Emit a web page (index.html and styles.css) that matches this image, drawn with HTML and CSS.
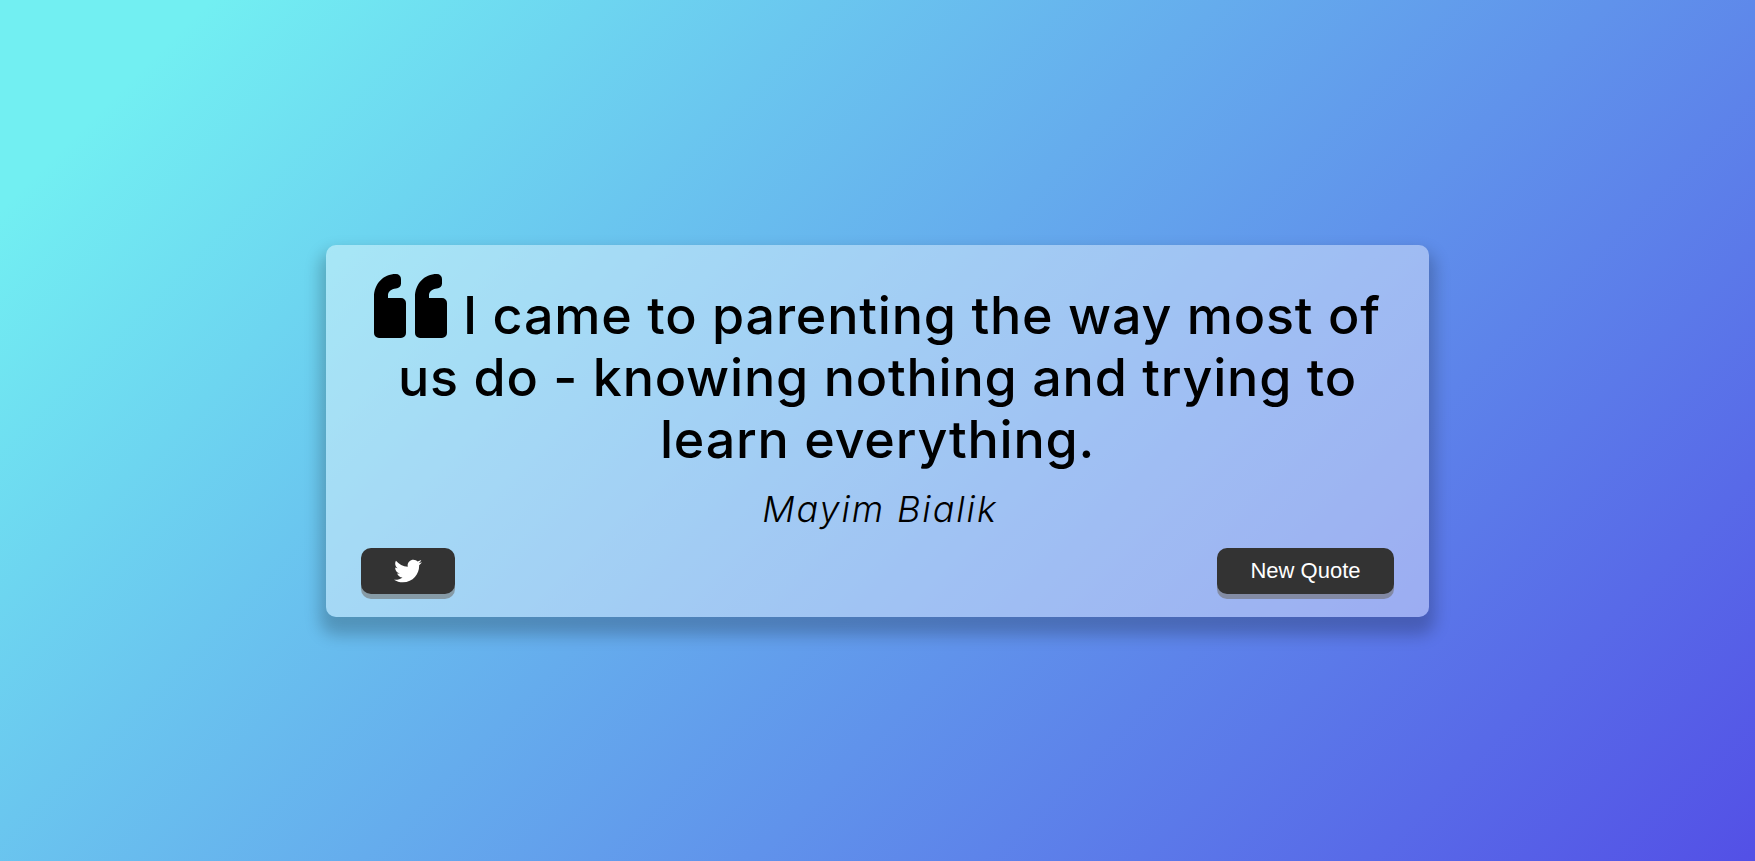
FILE: index.html
```html
<!DOCTYPE html>
<html lang="en">

<head>
    <meta charset="UTF-8">
    <meta name="viewport" content="width=device-width, initial-scale=1.0">
    <title>Quote Generator</title>

    <link rel="stylesheet" href="styles.css">
</head>

<body>
    <div class="quote-container">
        <div class="quote-text">
            <svg class="quote-mark" viewBox="0 0 73 64" aria-hidden="true">
                <path d="M5 64h22a5 5 0 0 0 5-5V29a5 5 0 0 0-5-5H14v-3c0-3 3-6 8-6.500a5 5 0 0 0 5-5V5a5 5 0 0 0-5-5C9 0 0 10 0 23v36a5 5 0 0 0 5 5z"/>
                <path d="M46 64h22a5 5 0 0 0 5-5V29a5 5 0 0 0-5-5H55v-3c0-3 3-6 8-6.500a5 5 0 0 0 5-5V5a5 5 0 0 0-5-5C50 0 41 10 41 23v36a5 5 0 0 0 5 5z"/>
            </svg>
            <span id="quote">I came to parenting the way most of us do - knowing nothing and trying to learn everything.</span>
        </div>
        <div class="quote-author">
            <span id="author">Mayim Bialik</span>
        </div>
        <div class="button-container">
            <button class="twitter-button" id="twitter" title="Tweet This!">
                <svg class="twitter-icon" viewBox="0 0 512 512" aria-hidden="true">
                    <path d="M459.37 151.716c.325 4.548.325 9.097.325 13.645 0 138.72-105.583 298.558-298.558 298.558-59.452 0-114.68-17.219-161.137-47.106 8.447.974 16.568 1.299 25.34 1.299 49.055 0 94.213-16.568 130.274-44.832-46.132-.975-84.792-31.188-98.112-72.772 6.498.974 12.995 1.624 19.818 1.624 9.421 0 18.843-1.3 27.614-3.573-48.081-9.747-84.143-51.98-84.143-102.985v-1.299c13.969 7.797 30.214 12.67 47.431 13.319-28.264-18.843-46.781-51.005-46.781-87.391 0-19.492 5.197-37.36 14.294-52.954 51.655 63.675 129.3 105.258 216.365 109.807-1.624-7.797-2.599-15.918-2.599-24.04 0-57.828 46.782-104.934 104.934-104.934 30.213 0 57.502 12.67 76.67 33.137 23.715-4.548 46.456-13.32 66.599-25.34-7.798 24.366-24.366 44.833-46.132 57.827 21.117-2.273 41.584-8.122 60.426-16.243-14.292 20.791-32.161 39.308-52.628 54.253z"/>
                </svg>
            </button>
            <button id="new-quote">New Quote</button>
        </div>
    </div>
</body>

</html>
```
FILE: styles.css
```css
html {
    box-sizing: border-box;
}

body {
    margin: 0;
    min-height: 100vh;
    background: linear-gradient(135deg, #72eff2 8%, #5350e6 100%);
    color: #000;
    font-family: "Inter", "Open Sans", sans-serif;
    display: flex;
    align-items: center;
    justify-content: center;
}

.quote-container {
    width: 1103px;
    height: 372px;
    box-sizing: border-box;
    padding: 29px 35px 24px;
    border-radius: 10px;
    background-color: rgba(255, 255, 255, 0.4);
    box-shadow: 0 12px 16px 6px rgba(0, 0, 0, 0.22);
}

.quote-text {
    text-align: center;
    font-size: 52px;
    font-weight: 500;
    line-height: 62px;
    letter-spacing: 0.8px;
}

.quote-mark {
    width: 73px;
    height: 64px;
    vertical-align: -4px;
    margin-right: 1px;
}

.quote-author {
    margin-top: 15px;
    padding-left: 5px;
    text-align: center;
    font-size: 36px;
    font-weight: 300;
    font-style: italic;
    line-height: 46px;
    letter-spacing: 1.9px;
}

.button-container {
    margin-top: 16px;
    display: flex;
    justify-content: space-between;
}

button {
    height: 46px;
    width: 177px;
    border: none;
    border-radius: 10px;
    background-color: #333;
    color: #fff;
    font-family: "Liberation Sans", Arial, sans-serif;
    font-size: 22px;
    padding: 0;
    box-shadow: 0 5px 0 rgba(110, 105, 100, 0.55);
    cursor: pointer;
}

.twitter-button {
    width: 94px;
}

.twitter-icon {
    width: 28px;
    height: 28px;
    fill: #fff;
    vertical-align: middle;
}
```
